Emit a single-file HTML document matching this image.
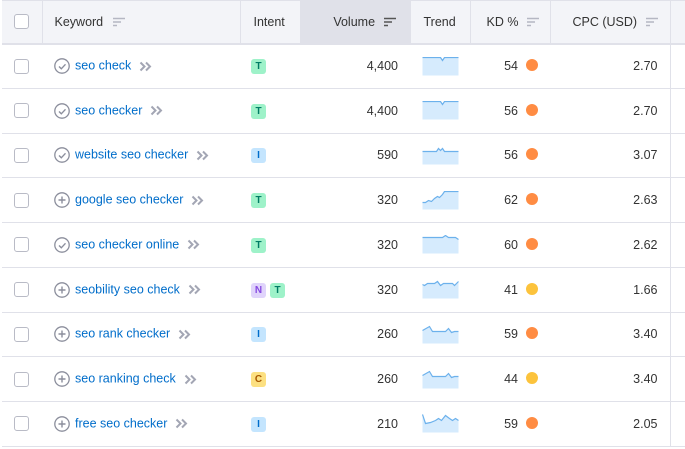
<!DOCTYPE html>
<html><head><style>
*{margin:0;padding:0;box-sizing:border-box}
body{width:685px;height:449px;overflow:hidden;background:#fff;font-family:"Liberation Sans",sans-serif;font-size:12.5px;color:#333}
table{border-collapse:collapse;table-layout:fixed;position:absolute;left:2px;top:0;width:700px}
th{height:43px;background:#f3f4f8;font-weight:normal;color:#333;border-right:1px solid #e0e1e9;border-bottom:2px solid #e0e1e9;border-top:1px solid #e0e1e9;text-align:left;padding:0 12px;font-size:12.5px;white-space:nowrap}
td{height:44.75px;border-bottom:1px solid #e0e1e9;padding:0 12px;white-space:nowrap}
.cb{width:15px;height:15px;border:1px solid #b9bbc6;border-radius:3px;display:inline-block;vertical-align:middle;background:#fff}
.num{text-align:right}
a{color:#006dca;text-decoration:none}
.ic{display:inline-block;vertical-align:middle;margin-right:5px}
.chev{display:inline-block;vertical-align:middle;margin-left:8px}
.b{display:inline-block;width:15px;height:15px;border-radius:3px;font-size:10px;font-weight:bold;text-align:center;line-height:15px;margin-right:4px}
.T{background:#9ef2c9;color:#007c65}.I{background:#c4e5fe;color:#006dca}.N{background:#e0d4fb;color:#8649e1}.C{background:#fce081;color:#a75800}
.dot{display:inline-block;width:12px;height:12px;border-radius:50%;margin-left:8px;vertical-align:-1px}
.o{background:#ff8c43}.y{background:#fcc33c}
.s{font-size:0}
</style></head><body>
<table>
<colgroup><col style="width:40px"><col style="width:198px"><col style="width:60px"><col style="width:110px"><col style="width:60px"><col style="width:80px"><col style="width:120px"><col style="width:32px"></colgroup>
<tr>
<th style="padding:0 12px"><span class="cb"></span></th>
<th>Keyword <svg width="12" height="10" style="margin-left:6px;vertical-align:middle"><path d="M0 1.5h12M0 5h8M0 8.5h4" stroke="#b5b7c3" stroke-width="1.6"/></svg></th>
<th style="padding:0 13px">Intent</th>
<th class="num" style="background:#e0e1e9;padding-right:14px">Volume <svg width="12" height="10" style="margin-left:5px;vertical-align:middle"><path d="M0 1.5h12M0 5h8M0 8.5h4" stroke="#555" stroke-width="1.6"/></svg></th>
<th style="padding:0 13px">Trend</th>
<th style="padding-left:16px">KD % <svg width="12" height="10" style="margin-left:5px;vertical-align:middle"><path d="M0 1.5h12M0 5h8M0 8.5h4" stroke="#b5b7c3" stroke-width="1.6"/></svg></th>
<th style="padding-left:22px">CPC (USD) <svg width="12" height="10" style="margin-left:5px;vertical-align:middle"><path d="M0 1.5h12M0 5h8M0 8.5h4" stroke="#b5b7c3" stroke-width="1.6"/></svg></th>
<th></th>
</tr>
<tbody id="b"></tbody>
</table>
<script>
var rows=[
["seo check","c",["T"],"4,400","0,0 18,0 20,3 22,0 36,0",54,"o","2.70"],
["seo checker","c",["T"],"4,400","0,0 18,0 20,3 22,0 36,0",56,"o","2.70"],
["website seo checker","c",["I"],"590","0,5 14,5 16,2 18,4 20,2 22,5 36,5",56,"o","3.07"],
["google seo checker","p",["T"],"320","0,11 3,11 6,9 9,10 12,7 15,5 17,6 20,3 22,0 36,0",62,"o","2.63"],
["seo checker online","c",["T"],"320","0,2 20,2 23,0 26,2 33,2 36,4",60,"o","2.62"],
["seobility seo check","p",["N","T"],"320","0,4 2,5 5,3 12,3 15,1 18,5 21,3 30,3 32,5 36,1",41,"y","1.66"],
["seo rank checker","p",["I"],"260","0,5 7,1 10,6 23,6 26,3 29,7 32,6 36,6",59,"o","3.40"],
["seo ranking check","p",["C"],"260","0,5 7,1 10,6 23,6 26,3 29,7 32,6 36,6",44,"y","3.40"],
["free seo checker","p",["I"],"210","0,0 3,9 8,8 13,6 16,4 19,6 23,1 27,4 30,6 33,4 36,6",59,"o","2.05"]];
var h="";
rows.forEach(function(r,i){
var ic=r[1]=="c"?'<path d="M5 8.5l2.3 2.3 4.2-4.5" fill="none" stroke="#8b8e9c" stroke-width="1.4"/>':'<path d="M8 4.5v7M4.5 8h7" stroke="#8b8e9c" stroke-width="1.4"/>';
var badges=r[2].map(function(x){return '<span class="b '+x+'">'+x+'</span>'}).join("");
var pts=r[4];var area="0,18 "+pts+" 36,18";
h+='<tr><td><span class="cb"></span></td><td><svg class="ic" width="16" height="16"><circle cx="8" cy="8" r="7.2" fill="none" stroke="#8b8e9c" stroke-width="1.3"/>'+ic+'</svg><a>'+r[0]+'</a><svg class="chev" width="13" height="11"><path d="M1.5 1.5l4 4-4 4M7 1.5l4 4-4 4" fill="none" stroke="#a3a6b4" stroke-width="2"/></svg></td><td style="padding-left:11px">'+badges+'</td><td class="num">'+r[3]+'</td><td class="s"><svg width="37" height="19" style="vertical-align:middle"><polygon points="'+area+'" fill="#d6ebfd" transform="translate(0.5,0.5)"/><polyline points="'+pts+'" fill="none" stroke="#6cb1ec" stroke-width="1.2" transform="translate(0.5,0.5)"/></svg></td><td class="num" style="padding-right:12px">'+r[5]+'<span class="dot '+r[6]+'"></span></td><td class="num">'+r[7]+'</td><td style="border-left:1px solid #e0e1e9"></td></tr>';
});
document.getElementById("b").innerHTML=h;
</script>
</body></html>
